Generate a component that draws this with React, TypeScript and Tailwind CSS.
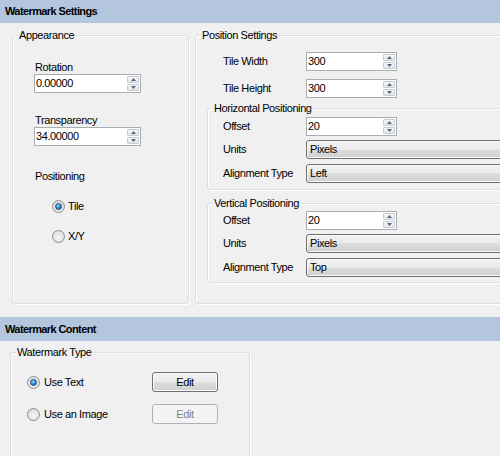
import React from 'react';

const winButton =
  'border border-[#707070] rounded-[3px] bg-[linear-gradient(to_bottom,#f2f2f2_0%,#ebebeb_50%,#dddddd_50%,#cfcfcf_100%)] shadow-[inset_0_0_0_1px_#fbfbfb]';

const Header: React.FC<{ title: string; className?: string }> = ({ title, className = '' }) => (
  <div className={`flex items-center pl-[5px] bg-[#b3c6de] font-bold tracking-[-0.6px] ${className}`}>{title}</div>
);

const Group: React.FC<{ title: string; className?: string; children?: React.ReactNode }> = ({
  title,
  className = '',
  children,
}) => (
  <div
    className={`relative shrink-0 border border-[#d5dfe5] rounded-[3px] shadow-[inset_1px_1px_0_#ffffff,1px_1px_0_#ffffff] ${className}`}
  >
    <span className="absolute -top-[7px] left-[5px] px-[1px] bg-[#f0f0f0] leading-[13px] whitespace-nowrap">{title}</span>
    {children}
  </div>
);

const Arrow: React.FC<{ up?: boolean }> = ({ up }) => (
  <svg width="5" height="3" viewBox="0 0 5 3">
    <path d={up ? 'M2.5 0 L5 3 L0 3 Z' : 'M0 0 L5 0 L2.5 3 Z'} fill="#4e6a92" />
  </svg>
);

const SpinBox: React.FC<{ value: string; width: string }> = ({ value, width }) => (
  <div className={`flex h-[19px] shrink-0 border border-[#abadb3] bg-white ${width}`}>
    <div className="flex-1 pl-[1px] leading-[17px]">{value}</div>
    <div className="flex flex-col w-[13px] py-[1px] pr-[1px] gap-[1px]">
      <div className="flex-1 flex items-center justify-center border border-[#c9cdd3] rounded-[1px] bg-[linear-gradient(to_bottom,#f6f6f6,#e4e4e4)]">
        <Arrow up />
      </div>
      <div className="flex-1 flex items-center justify-center border border-[#c9cdd3] rounded-[1px] bg-[linear-gradient(to_bottom,#f6f6f6,#e4e4e4)]">
        <Arrow />
      </div>
    </div>
  </div>
);

const Combo: React.FC<{ value: string }> = ({ value }) => (
  <div className={`flex-1 h-[19px] pl-[3px] leading-[17px] ${winButton}`}>{value}</div>
);

const Radio: React.FC<{ checked?: boolean }> = ({ checked }) => (
  <div className="w-[13px] h-[13px] shrink-0 rounded-full border border-[#8e8f8f] bg-[radial-gradient(circle_at_50%_60%,#f6f6f6,#d4d4d4)] flex items-center justify-center">
    {checked && (
      <div className="w-[7px] h-[7px] rounded-full border border-[#1c4f85] bg-[radial-gradient(circle_at_40%_35%,#9adcf8,#2a7fc4_55%,#0f4a86)]" />
    )}
  </div>
);

const FieldRow: React.FC<{ label: string; pad: string; children: React.ReactNode; className?: string }> = ({
  label,
  pad,
  children,
  className = '',
}) => (
  <div className={`flex items-center ${pad} ${className}`}>
    <span className="w-[83px] shrink-0">{label}</span>
    {children}
  </div>
);

export default function App() {
  return (
    <div className="w-[500px] h-[456px] overflow-hidden bg-[#f0f0f0] text-[11px] leading-[13px] text-black tracking-[-0.4px] font-['Liberation_Sans',Arial,sans-serif]">
      <Header title="Watermark Settings" className="h-[23px]" />

      <div className="flex mt-[12px] ml-[12px]">
        <Group title="Appearance" className="w-[177px] h-[269px]">
          <div className="flex flex-col pl-[21px]">
            <span className="mt-[25px] pl-[1px]">Rotation</span>
            <SpinBox value="0.00000" width="w-[107px]" />
            <span className="mt-[21px] pl-[1px]">Transparency</span>
            <SpinBox value="34.00000" width="w-[107px]" />
            <span className="mt-[24px] pl-[1px]">Positioning</span>
            <div className="flex items-center gap-[3px] ml-[18px] mt-[17px]">
              <Radio checked />
              <span>Tile</span>
            </div>
            <div className="flex items-center gap-[3px] ml-[18px] mt-[17px]">
              <Radio />
              <span>X/Y</span>
            </div>
          </div>
        </Group>

        <Group title="Position Settings" className="ml-[6px] w-[330px] h-[269px]">
          <FieldRow label="Tile Width" pad="pl-[27px]" className="mt-[16px]">
            <SpinBox value="300" width="w-[91px]" />
          </FieldRow>
          <FieldRow label="Tile Height" pad="pl-[27px]" className="mt-[8px]">
            <SpinBox value="300" width="w-[91px]" />
          </FieldRow>

          <Group title="Horizontal Positioning" className="ml-[11px] mt-[10px] w-[330px] pb-[6px]">
            <FieldRow label="Offset" pad="pl-[15px]" className="mt-[8px]">
              <SpinBox value="20" width="w-[91px]" />
            </FieldRow>
            <FieldRow label="Units" pad="pl-[15px]" className="mt-[4px]">
              <Combo value="Pixels" />
            </FieldRow>
            <FieldRow label="Alignment Type" pad="pl-[15px]" className="mt-[5px]">
              <Combo value="Left" />
            </FieldRow>
          </Group>

          <Group title="Vertical Positioning" className="ml-[11px] mt-[13px] w-[330px] pb-[5px]">
            <FieldRow label="Offset" pad="pl-[15px]" className="mt-[7px]">
              <SpinBox value="20" width="w-[91px]" />
            </FieldRow>
            <FieldRow label="Units" pad="pl-[15px]" className="mt-[4px]">
              <Combo value="Pixels" />
            </FieldRow>
            <FieldRow label="Alignment Type" pad="pl-[15px]" className="mt-[5px]">
              <Combo value="Top" />
            </FieldRow>
          </Group>
        </Group>
      </div>

      <Header title="Watermark Content" className="h-[24px] mt-[13px]" />

      <Group title="Watermark Type" className="ml-[10px] mt-[11px] w-[240px] h-[120px]">
        <div className="flex items-center mt-[19px] pl-[16px]">
          <div className="flex items-center gap-[4px] w-[125px]">
            <Radio checked />
            <span>Use Text</span>
          </div>
          <button className={`w-[66px] h-[20px] text-center leading-[18px] ${winButton}`}>Edit</button>
        </div>
        <div className="flex items-center mt-[12px] pl-[16px]">
          <div className="flex items-center gap-[4px] w-[125px]">
            <Radio />
            <span>Use an Image</span>
          </div>
          <button
            disabled
            className="w-[66px] h-[20px] text-center leading-[18px] border border-[#adb2b5] rounded-[3px] bg-[#f4f4f4] text-[#838383]"
          >
            Edit
          </button>
        </div>
      </Group>
    </div>
  );
}
